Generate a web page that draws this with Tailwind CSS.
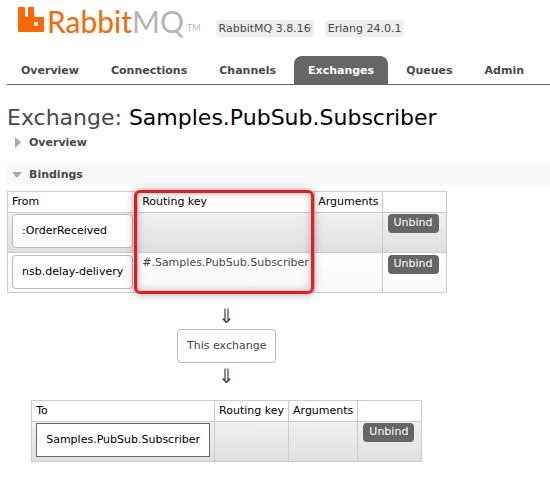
<!DOCTYPE html>
<html lang="en">
<head>
<meta charset="utf-8">
<title>RabbitMQ Management</title>
<script src="https://cdn.jsdelivr.net/npm/@tailwindcss/browser@4"></script>
</head>
<body class="bg-white pl-[7px] font-['Verdana','DejaVu_Sans',sans-serif] text-[11px] leading-4 text-[#484848]">
<header class="flex items-start">
  <a href="#" class="flex h-10 items-start pl-[11px] pt-[7px]" aria-label="RabbitMQ">
    <svg class="h-[25px] w-[26px] shrink-0" viewBox="0 0 26 25" aria-hidden="true"><path fill="#f60" fill-rule="evenodd" d="M1 0H6Q7 0 7 1V9Q7 10 8 10H9Q10 10 10 9V1Q10 0 11 0H15Q16 0 16 1V9Q16 10 17 10H25Q26 10 26 11V24Q26 25 25 25H1Q0 25 0 24V1Q0 0 1 0ZM17 15Q16 15 16 16V18Q16 19 17 19H19Q20 19 20 18V16Q20 15 19 15Z"/></svg>
    <span class="pl-[3px] font-['Lato',sans-serif] text-[30px] leading-7 text-[#f60]">Rabbit<span class="text-[#b5b5b5]">MQ</span></span>
    <span class="pl-[3px] pt-[13px] font-['Lato',sans-serif] text-[9px] leading-4 text-[#b5b5b5]">TM</span>
  </a>
  <ul class="flex gap-[11px] pl-[15px] pt-5">
    <li class="rounded bg-[#eee] px-[3px] pt-px">RabbitMQ 3.8.16</li>
    <li class="rounded bg-[#eee] px-[3px] pt-px">Erlang 24.0.1</li>
  </ul>
</header>
<nav class="mt-4 flex gap-1 border-b border-[#666] font-bold">
  <a href="#" class="rounded-t-lg px-[14px] pt-[7px] pb-[5px]">Overview</a>
  <a href="#" class="rounded-t-lg px-[14px] pt-[7px] pb-[5px]">Connections</a>
  <a href="#" class="rounded-t-lg px-[14px] pt-[7px] pb-[5px]">Channels</a>
  <a href="#" class="rounded-t-lg bg-[#666] px-[14px] pt-[7px] pb-[5px] text-white">Exchanges</a>
  <a href="#" class="rounded-t-lg px-[14px] pt-[7px] pb-[5px]">Queues</a>
  <a href="#" class="rounded-t-lg px-[14px] pt-[7px] pb-[5px]">Admin</a>
</nav>
<main>
  <h1 class="pt-[19px] text-[22px] leading-7">Exchange: <b class="font-normal text-black">Samples.PubSub.Subscriber</b></h1>
  <h2><button class="flex w-full items-center py-[3px] text-left font-bold">
    <svg class="mx-1 size-[14px]" viewBox="0 0 14 14" aria-hidden="true"><path fill="#aaa" d="M4 1L10 6.500L4 12Z"/></svg>Overview</button></h2>
  <h2 class="mt-[9px] bg-[#f8f8f8]"><button class="flex w-full items-center pt-1 pb-[2px] text-left font-bold">
    <svg class="mx-1 size-[14px]" viewBox="0 0 14 14" aria-hidden="true"><path fill="#aaa" d="M1 4H11L6 10Z"/></svg>Bindings</button></h2>
  <section class="relative mt-[6px] flex w-fit flex-col items-center">
    <table class="border-collapse text-left whitespace-nowrap">
      <thead class="text-black"><tr class="h-[21px]">
        <th class="w-[129px] border border-[#ccc] px-1 font-normal">From</th>
        <th class="w-[177px] border border-[#ccc] px-1 font-normal">Routing key</th>
        <th class="w-[67px] border border-[#ccc] px-[3px] font-normal">Arguments</th>
        <th class="w-16 border border-[#ccc]"></th>
      </tr></thead>
      <tbody class="align-top">
        <tr class="h-10 bg-linear-to-b from-[#f0f0f0] to-[#dfdfdf]">
          <td class="border border-[#ccc] px-1 pt-px"><a href="#" class="block rounded border border-[#bbb] bg-white px-[9px] py-2 text-black">:OrderReceived</a></td>
          <td class="border border-[#ccc]"></td>
          <td class="border border-[#ccc]"></td>
          <td class="border border-[#ccc] px-[5px] pt-px"><button class="block rounded bg-[#666] px-[6px] pt-px pb-[2px] text-white">Unbind</button></td>
        </tr>
        <tr class="h-10 bg-linear-to-b from-white to-[#f8f8f8]">
          <td class="border border-[#ccc] px-1 pt-[2px]"><a href="#" class="block rounded border border-[#bbb] bg-white px-[9px] py-2 text-black">nsb.delay-delivery</a></td>
          <td class="border border-[#ccc] px-1 pt-[2px]">#.Samples.PubSub.Subscriber</td>
          <td class="border border-[#ccc]"></td>
          <td class="border border-[#ccc] px-[5px] pt-[2px]"><button class="block rounded bg-[#666] px-[6px] pt-px pb-[2px] text-white">Unbind</button></td>
        </tr>
      </tbody>
    </table>
    <div class="pointer-events-none absolute -top-px left-[127px] h-[104px] w-[180px] rounded-md border-[3px] border-[#f01818] shadow-[0_0_8px_#0005,inset_0_0_8px_#0004]"></div>
    <span class="mt-[11px] text-[20px] leading-6">⇓</span>
    <span class="my-px rounded border border-[#bbb] px-[9px] py-2">This exchange</span>
    <span class="text-[20px] leading-6">⇓</span>
    <table class="mt-3 border-collapse text-left whitespace-nowrap">
      <thead class="text-black"><tr class="h-[21px]">
        <th class="w-[182px] border border-[#ccc] px-1 font-normal">To</th>
        <th class="w-[74px] border border-[#ccc] px-1 font-normal">Routing key</th>
        <th class="w-[69px] border border-[#ccc] px-1 font-normal">Arguments</th>
        <th class="w-16 border border-[#ccc]"></th>
      </tr></thead>
      <tbody class="align-top">
        <tr class="h-10 bg-linear-to-b from-[#f0f0f0] to-[#dfdfdf]">
          <td class="border border-[#ccc] px-1 pt-px"><a href="#" class="block border border-[#666] bg-white px-[9px] py-2 text-black">Samples.PubSub.Subscriber</a></td>
          <td class="border border-[#ccc]"></td>
          <td class="border border-[#ccc]"></td>
          <td class="border border-[#ccc] px-[5px] pt-px"><button class="block rounded bg-[#666] px-[6px] pt-px pb-[2px] text-white">Unbind</button></td>
        </tr>
      </tbody>
    </table>
  </section>
</main>
</body>
</html>
